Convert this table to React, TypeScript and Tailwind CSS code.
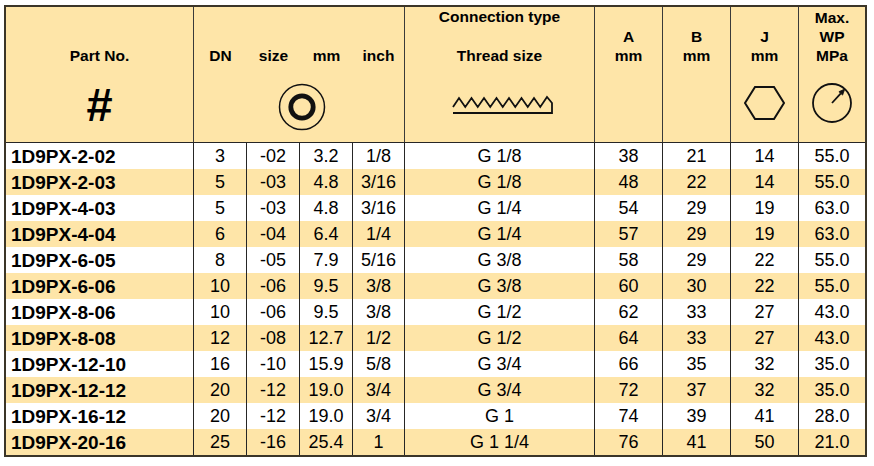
import React from "react";

const rows: string[][] = [
  ["1D9PX-2-02", "3", "-02", "3.2", "1/8", "G 1/8", "38", "21", "14", "55.0"],
  ["1D9PX-2-03", "5", "-03", "4.8", "3/16", "G 1/8", "48", "22", "14", "55.0"],
  ["1D9PX-4-03", "5", "-03", "4.8", "3/16", "G 1/4", "54", "29", "19", "63.0"],
  ["1D9PX-4-04", "6", "-04", "6.4", "1/4", "G 1/4", "57", "29", "19", "63.0"],
  ["1D9PX-6-05", "8", "-05", "7.9", "5/16", "G 3/8", "58", "29", "22", "55.0"],
  ["1D9PX-6-06", "10", "-06", "9.5", "3/8", "G 3/8", "60", "30", "22", "55.0"],
  ["1D9PX-8-06", "10", "-06", "9.5", "3/8", "G 1/2", "62", "33", "27", "43.0"],
  ["1D9PX-8-08", "12", "-08", "12.7", "1/2", "G 1/2", "64", "33", "27", "43.0"],
  ["1D9PX-12-10", "16", "-10", "15.9", "5/8", "G 3/4", "66", "35", "32", "35.0"],
  ["1D9PX-12-12", "20", "-12", "19.0", "3/4", "G 3/4", "72", "37", "32", "35.0"],
  ["1D9PX-16-12", "20", "-12", "19.0", "3/4", "G 1", "74", "39", "41", "28.0"],
  ["1D9PX-20-16", "25", "-16", "25.4", "1", "G 1 1/4", "76", "41", "50", "21.0"],
];

const cellW = [
  "w-[53px]",
  "w-[53px]",
  "w-[53px]",
  "w-[52px]",
  "w-[190px]",
  "w-[68px]",
  "w-[68px]",
  "w-[68px]",
  "w-[66px]",
];

function RingIcon() {
  return (
    <svg width="50" height="50" viewBox="0 0 50 50">
      <circle cx="25" cy="25" r="22.5" fill="none" stroke="#111" strokeWidth="1.5" />
      <circle cx="25" cy="25" r="11.2" fill="none" stroke="#111" strokeWidth="4.8" />
    </svg>
  );
}

function ThreadIcon() {
  const pts: string[] = ["2,12"];
  for (let i = 0; i < 7; i++) {
    const px = 8 + i * 12.5;
    pts.push(`${px},3`);
    pts.push(`${px + 6.25},12`);
  }
  pts.push("96,2");
  pts.push("101,8");
  pts.push("101,18");
  pts.push("2,18");
  return (
    <svg width="104" height="20" viewBox="0 0 104 20">
      <polyline
        points={pts.join(" ")}
        fill="none"
        stroke="#111"
        strokeWidth="1.8"
        strokeLinejoin="miter"
      />
    </svg>
  );
}

function HexIcon() {
  return (
    <svg width="44" height="38" viewBox="0 0 44 38">
      <polygon
        points="2,19 12,3 31,3 41,19 31,35 12,35"
        fill="none"
        stroke="#111"
        strokeWidth="2"
        strokeLinejoin="miter"
      />
    </svg>
  );
}

function GaugeIcon() {
  return (
    <svg width="44" height="44" viewBox="0 0 44 44">
      <circle cx="22" cy="22" r="19" fill="none" stroke="#111" strokeWidth="1.8" />
      <line x1="22" y1="22" x2="30.8" y2="12.4" stroke="#111" strokeWidth="1.8" />
      <polygon points="34.8,8 32.6,14.1 28.9,10.7" fill="#111" stroke="#111" strokeWidth="0.8" />
    </svg>
  );
}

export default function App() {
  return (
    <div className="w-[874px] h-[466px] bg-white pt-[5px] pl-[4px] font-['Liberation_Sans',Arial,sans-serif] text-black">
      <div className="w-[863px] border-2 border-[#3b3528]">
        {/* Header */}
        <div className="flex h-[136px] border-b border-[#262626] bg-[#fee5a8] text-[15.5px] font-bold leading-[19px]">
          <div className="w-[188px] border-r border-[#3a3a3a] flex flex-col items-center">
            <div className="h-[58px] flex flex-col justify-end">
              <span>Part No.</span>
            </div>
            <div className="mt-[16px] text-[47px] leading-[47px] font-bold">#</div>
          </div>
          <div className="w-[211px] border-r border-[#3a3a3a] flex flex-col">
            <div className="h-[58px] flex items-end">
              <span className="w-[53px] text-center">DN</span>
              <span className="w-[53px] text-center">size</span>
              <span className="w-[53px] text-center">mm</span>
              <span className="w-[51px] text-center">inch</span>
            </div>
            <div className="mt-[17px] flex justify-center pl-[5px]">
              <RingIcon />
            </div>
          </div>
          <div className="w-[190px] border-r border-[#3a3a3a] flex flex-col items-center">
            <div className="h-[58px] flex flex-col justify-between items-center">
              <span>Connection type</span>
              <span>Thread size</span>
            </div>
            <div className="mt-[30px] pl-[7px]">
              <ThreadIcon />
            </div>
          </div>
          <div className="w-[68px] border-r border-[#3a3a3a] flex flex-col items-center">
            <div className="h-[58px] flex flex-col justify-end items-center">
              <span>A</span>
              <span>mm</span>
            </div>
          </div>
          <div className="w-[68px] border-r border-[#3a3a3a] flex flex-col items-center">
            <div className="h-[58px] flex flex-col justify-end items-center">
              <span>B</span>
              <span>mm</span>
            </div>
          </div>
          <div className="w-[68px] border-r border-[#3a3a3a] flex flex-col items-center">
            <div className="h-[58px] flex flex-col justify-end items-center">
              <span>J</span>
              <span>mm</span>
            </div>
            <div className="mt-[19px]">
              <HexIcon />
            </div>
          </div>
          <div className="w-[66px] flex flex-col items-center">
            <div className="h-[58px] flex flex-col justify-end items-center">
              <span>Max.</span>
              <span>WP</span>
              <span>MPa</span>
            </div>
            <div className="mt-[16px]">
              <GaugeIcon />
            </div>
          </div>
        </div>
        {/* Body */}
        {rows.map((r, i) => (
          <div
            key={i}
            className={`flex h-[26px] items-stretch ${i % 2 === 0 ? "bg-white" : "bg-[#fee5a8]"}`}
          >
            <div className="w-[188px] border-r border-[#262626] pl-[5px] flex items-center text-[19px] font-bold leading-none">
              {r[0]}
            </div>
            {r.slice(1).map((v, j) => (
              <div
                key={j}
                className={`${cellW[j]} ${j < 8 ? "border-r border-[#262626]" : ""} flex items-center justify-center text-[18px] leading-none`}
              >
                {v}
              </div>
            ))}
          </div>
        ))}
      </div>
    </div>
  );
}
